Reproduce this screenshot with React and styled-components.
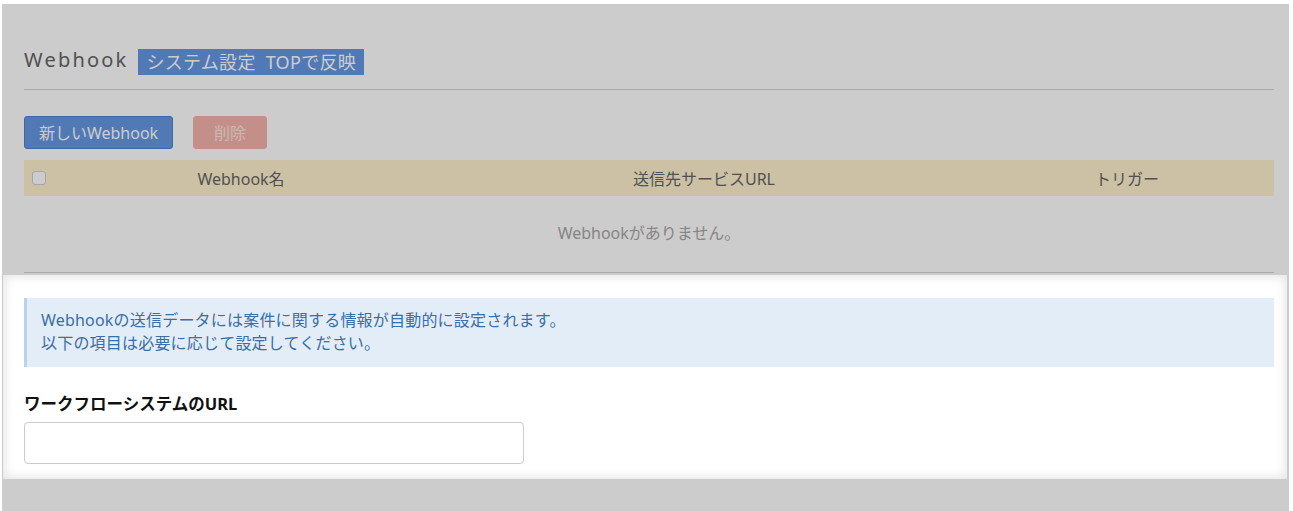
import React from 'react'
import styled, { createGlobalStyle } from 'styled-components'

const GlobalStyle = createGlobalStyle`
  html, body {
    margin: 0;
    padding: 0;
    background: #fff;
  }
  body {
    font-family: "Noto Sans", "Noto Sans CJK JP", sans-serif;
    color: #333;
  }
`

const Page = styled.div`
  padding: 4px 4px 0 2px;
  height: 511px;
  box-sizing: border-box;
`

const Panel = styled.div`
  position: relative;
  overflow: hidden;
  height: 100%;
  background: #fff;
`

const Inner = styled.div`
  padding: 0 15px 0 22px;
`

const TitleRow = styled.div`
  display: flex;
  align-items: center;
  gap: 10px;
  padding-top: 45px;
  padding-bottom: 14px;
  border-bottom: 1px solid #d4d4d4;
`

const Title = styled.h2`
  margin: 0;
  align-self: flex-start;
  font-family: "Noto Sans", sans-serif;
  font-weight: 400;
  font-size: 20px;
  letter-spacing: 2.2px;
  color: #666;
  line-height: 22px;
`

const Badge = styled.span`
  display: inline-block;
  background: #6598e3;
  color: #fff;
  font-size: 18px;
  line-height: 26px;
  padding: 0 8px;
  letter-spacing: 0.3px;
  white-space: pre;
`

const Toolbar = styled.div`
  display: flex;
  gap: 20px;
  margin-top: 26px;
`

const Button = styled.button`
  height: 33px;
  padding: 0 12px 2px;
  border-radius: 3px;
  font-family: "Noto Sans", "Noto Sans CJK JP", sans-serif;
  font-size: 16px;
  border: 1px solid ${p => (p.$danger ? '#f5b3aa' : '#4e80ce')};
  background: ${p => (p.$danger ? '#f5b3aa' : '#6598e3')};
  color: ${p => (p.$danger ? '#fde6e2' : '#fff')};
  width: ${p => p.$width}px;
  cursor: ${p => (p.$danger ? 'default' : 'pointer')};
`

const Table = styled.table`
  width: 100%;
  border-collapse: collapse;
  margin-top: 11px;
  font-size: 16px;
  table-layout: fixed;
`

const HeadRow = styled.tr`
  background: #fff2ce;
  height: 36px;
`

const Th = styled.th`
  font-weight: 400;
  color: #666;
  text-align: ${p => p.$align || 'center'};
  padding: 0;
  width: ${p => (p.$width ? `${p.$width}px` : 'auto')};
`

const Check = styled.span`
  display: block;
  margin-left: 8px;
  width: 12px;
  height: 12px;
  border: 1px solid #d0d0d0;
  border-radius: 3px;
  background: #fff;
`

const EmptyCell = styled.td`
  height: 72px;
  padding: 0 0 4px;
  text-align: center;
  color: #a8a8a8;
  border-bottom: 1px solid #d2d2d2;
`

const Spotlight = styled.section`
  position: relative;
  z-index: 1;
  margin: 2px 2px 0 1px;
  padding: 23px 13px 15px 21px;
  background: #fff;
  box-shadow: 0 0 0 3000px rgba(0, 0, 0, 0.2), inset 0 0 11px 1px rgba(0, 0, 0, 0.12);
`

const Info = styled.div`
  background: #e3edf8;
  border-left: 3px solid #b9d3ef;
  padding: 11px 14px 12px 14px;
  color: #3a6ea8;
  font-size: 16px;
  letter-spacing: 0.2px;
  line-height: 23px;
`

const Field = styled.div`
  margin-top: 25px;
`

const Label = styled.label`
  display: block;
  font-weight: 700;
  font-size: 16.5px;
  line-height: 24px;
  color: #111;
  margin-bottom: 6px;
`

const Input = styled.input`
  display: block;
  box-sizing: border-box;
  width: 500px;
  height: 42px;
  border: 1px solid #ccc;
  border-radius: 4px;
  padding: 0 10px;
  font-size: 15px;
  outline: none;
`

const App = () => (
  <>
    <GlobalStyle />
    <Page>
      <Panel>
        <Inner>
          <TitleRow>
            <Title>Webhook</Title>
            <Badge>システム設定  TOPで反映</Badge>
          </TitleRow>

          <Toolbar>
            <Button $width={149}>新しいWebhook</Button>
            <Button $danger $width={74}>削除</Button>
          </Toolbar>

          <Table>
            <thead>
              <HeadRow>
                <Th $width={30} $align="left"><Check /></Th>
                <Th $width={374}>Webhook名</Th>
                <Th $width={552}>送信先サービスURL</Th>
                <Th>トリガー</Th>
              </HeadRow>
            </thead>
            <tbody>
              <tr>
                <EmptyCell colSpan={4}>Webhookがありません。</EmptyCell>
              </tr>
            </tbody>
          </Table>
        </Inner>

        <Spotlight>
          <Info>
            Webhookの送信データには案件に関する情報が自動的に設定されます。
            <br />
            以下の項目は必要に応じて設定してください。
          </Info>
          <Field>
            <Label htmlFor="workflow-url">ワークフローシステムのURL</Label>
            <Input id="workflow-url" type="text" />
          </Field>
        </Spotlight>
      </Panel>
    </Page>
  </>
)

export default App
